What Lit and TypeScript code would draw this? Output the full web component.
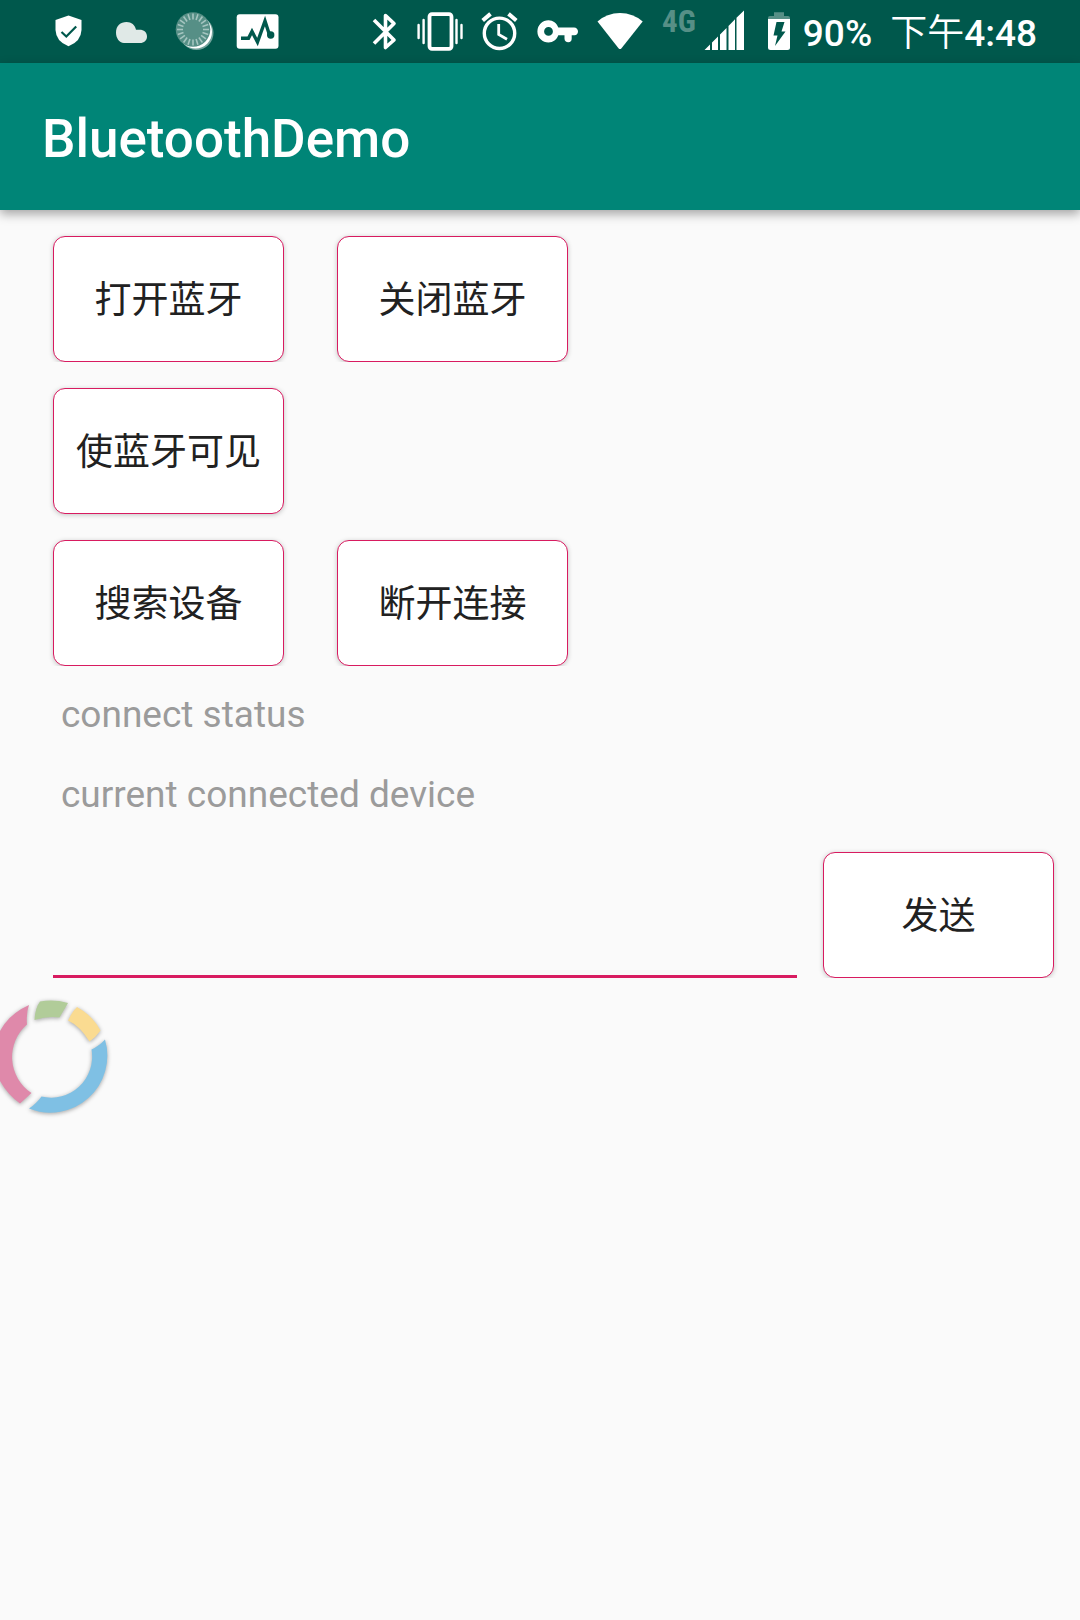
import { LitElement, html, css, svg } from "lit";
import { customElement, property, state } from "lit/decorators.js";

const ticks = Array.from({ length: 20 }, (_, i) => i * 18);

/* Each status icon is 63 units tall, the height of the status bar. */
const icons = {
  shield: {
    width: 63,
    art: svg`
      <path fill="#fff" d="M31.500 15.500 44.500 20V30Q44 41.500 31.500 46.300Q19 41.500 18.500 30V20Z"/>
      <path fill="none" stroke="#00584c" stroke-width="2.200" d="M24.500 32 29.300 36.500 39.200 26.500"/>`,
  },
  cloud: {
    width: 63,
    art: svg`
      <path fill="#e0e9e7" d="M24 43C19 42.500 16 38 16 32.500C16 26 20.500 22 26.500 22C31.500 22 35 25 36 29.800H39.500C44 29.800 47 32.500 47 36.500C47 40.500 44 43 40 43Z"/>`,
  },
  moon: {
    width: 63,
    art: svg`
      <circle cx="33.500" cy="33" r="17" fill="#fff" fill-opacity=".45"/>
      <circle cx="32.500" cy="32" r="16.500" fill="#fff"/>
      <circle cx="30" cy="29.500" r="17.300" fill="#568f86"/>
      ${ticks.map(
        (a) => svg`<path stroke="#a5c5c0" stroke-width="1.600" d="M30 13.500V19.500" transform="rotate(${a} 30 29.500)"/>`
      )}`,
  },
  pulse: {
    width: 63,
    art: svg`
      <rect x="10.700" y="14.200" width="41.800" height="34.600" rx="3" fill="#fff"/>
      <path fill="none" stroke="#00584c" stroke-width="3.400" d="M15 38.300H22.500L26 31.500 31.500 42 39 21 43.500 35"/>
      <circle cx="44.700" cy="35" r="3.700" fill="#00584c"/>`,
  },
  bluetooth: {
    width: 58,
    art: svg`
      <path fill="none" stroke="#fff" stroke-width="3.600" stroke-linejoin="round" d="M20 20 40 40 31.500 47.500V15.500L40 23.500 20 43.500"/>`,
  },
  vibrate: {
    width: 58,
    art: svg`
      <g fill="none" stroke="#fff">
        <rect x="17.500" y="14.200" width="22" height="34.600" rx="2.500" stroke-width="3.800"/>
        <path stroke-width="2.400" stroke-linecap="round" d="M6.600 25V38M11.600 20V43M44.500 20V43M49.500 25V38"/>
      </g>`,
  },
  alarm: {
    width: 58,
    art: svg`
      <g fill="none" stroke="#fff" stroke-width="3.400">
        <circle cx="29.500" cy="33.300" r="15.200"/>
        <path stroke-width="4" d="M12.700 20.500 20.500 13.900M46.300 20.500 38.500 13.900"/>
        <path stroke-width="2.800" d="M28.700 24V34.500L37 39.200"/>
      </g>`,
  },
  key: {
    width: 58,
    art: svg`
      <path fill="#fff" fill-rule="evenodd" d="M20.500 20.300C25 20.300 28.800 23.200 30.300 27.500H46C48.500 27.500 50 29.300 50 31.500S48.500 35.300 46.500 35.300H43.700V38.500C43.700 41 42.500 42.300 40.300 42.300S36.500 41 36.500 38.500V35.300H30.300C28.800 39.600 25 42.500 20.500 42.500A11.100 11.100 0 0 1 20.500 20.300ZM20.500 27A4.400 4.400 0 1 0 20.500 35.800A4.400 4.400 0 1 0 20.500 27Z"/>`,
  },
  wifi: {
    width: 68,
    art: svg`
      <path fill="#fff" d="M11.500 21.500Q21 13 34 13T56.700 21.500L35.500 48.200Q34 50 32.500 48.200Z"/>`,
  },
  signal: {
    width: 40,
    art: svg`
      <path fill="#fff" d="M.500 50 6 44.500V50ZM8 42.500 14 36.400V50H8ZM16 34.500 22.500 27.900V50H16ZM24.500 25.900 31 19.300V50H24.500ZM32.500 17.800 40 10.500V50H32.500Z"/>`,
  },
  battery: {
    width: 22,
    art: svg`
      <path fill="#568f86" d="M6 12.300H16V16H20Q22 16 22 18V19.500H0V18Q0 16 2 16H6Z"/>
      <path fill="#fff" d="M0 19H22V47.500Q22 50 19.500 50H2.500Q0 50 0 47.500Z"/>
      <path fill="#00584c" d="M8.500 22H16.500L13.500 31.500H17.500L7 46 9.500 35.500H5.500Z"/>`,
  },
};

type IconName = keyof typeof icons;

@customElement("status-icon")
class StatusIcon extends LitElement {
  @property() name: IconName = "shield";

  static styles = css`
    :host {
      display: block;
      flex: none;
    }
    .icon {
      display: block;
    }
  `;

  render() {
    const { width, art } = icons[this.name];
    return html`<svg class="icon" width=${width} height="63" viewBox="0 0 ${width} 63" aria-hidden="true">${art}</svg>`;
  }
}

@customElement("status-bar")
class StatusBar extends LitElement {
  static styles = css`
    :host {
      display: flex;
      justify-content: space-between;
      height: 63px;
      padding: 0 43px 0 37px;
      background: #00584c;
      color: #fff;
      font: 500 37px/67px Roboto, "Noto Sans CJK SC", sans-serif;
      white-space: nowrap;
    }
    .group {
      display: flex;
    }
    .network {
      font: 700 31px/44px "Roboto Condensed", Roboto, sans-serif;
      color: #568f86;
      margin: 0 8px;
    }
    .battery {
      margin: 0 13px 0 24px;
    }
    .level {
      margin-right: 18px;
    }
    .period {
      font-weight: 350;
    }
  `;

  render() {
    return html`
      <div class="group">
        <status-icon name="shield"></status-icon>
        <status-icon name="cloud"></status-icon>
        <status-icon name="moon"></status-icon>
        <status-icon name="pulse"></status-icon>
      </div>
      <div class="group">
        <status-icon name="bluetooth"></status-icon>
        <status-icon name="vibrate"></status-icon>
        <status-icon name="alarm"></status-icon>
        <status-icon name="key"></status-icon>
        <status-icon name="wifi"></status-icon>
        <span class="network">4G</span>
        <status-icon name="signal"></status-icon>
        <status-icon class="battery" name="battery"></status-icon>
        <span class="level">90%</span>
        <span class="time"><span class="period">下午</span>4:48</span>
      </div>
    `;
  }
}

@customElement("app-root")
class AppRoot extends LitElement {
  @state() private message = "";

  static styles = css`
    :host {
      display: flex;
      flex-direction: column;
      min-height: 100vh;
      overflow: hidden;
      background: #fafafa;
      font-family: Roboto, "Noto Sans CJK SC", sans-serif;
    }
    .app-bar {
      padding: 6px 42px 0;
      background: #008577;
      color: #fff;
      box-shadow: 0 4px 10px rgba(0, 0, 0, 0.35);
    }
    .title {
      margin: 0;
      font-size: 53px;
      font-weight: 500;
      line-height: 141px;
    }
    .content {
      display: flex;
      flex-direction: column;
      gap: 26px;
      padding: 26px 26px 0 53px;
    }
    .row {
      display: flex;
      gap: 53px;
    }
    .flat {
      clip-path: inset(-8px -8px 0 -8px);
    }
    .action {
      flex: none;
      box-sizing: border-box;
      width: 231px;
      height: 126px;
      padding: 4px 0 0;
      border: 1px solid #d81b60;
      border-radius: 12px;
      background: #fff;
      box-shadow: 0 1px 5px rgba(0, 0, 0, 0.22);
      color: #212121;
      font: 400 37px/54px Roboto, "Noto Sans CJK SC", sans-serif;
    }
    .status {
      display: flex;
      flex-direction: column;
      gap: 34px;
      padding: 0 0 8px 8px;
      color: #9b9b9b;
      font-size: 37px;
      line-height: 46px;
    }
    .line {
      margin: 0;
    }
    .compose {
      display: flex;
      gap: 26px;
    }
    .message {
      flex: 1;
      min-width: 0;
      box-sizing: border-box;
      padding: 0 8px;
      border: 0;
      border-bottom: 3px solid #d81b60;
      border-radius: 0;
      outline: none;
      background: none;
      color: #212121;
      font: 400 37px/54px Roboto, "Noto Sans CJK SC", sans-serif;
    }
    .ring {
      display: block;
      margin-top: 12px;
      filter: drop-shadow(0 1px 2px rgba(0, 0, 0, 0.35));
    }
  `;

  private onInput(e: Event) {
    this.message = (e.target as HTMLInputElement).value;
  }

  render() {
    return html`
      <status-bar></status-bar>
      <header class="app-bar"><h1 class="title">BluetoothDemo</h1></header>
      <main class="content">
        <div class="row flat">
          <button class="action" type="button">打开蓝牙</button>
          <button class="action" type="button">关闭蓝牙</button>
        </div>
        <div class="row">
          <button class="action" type="button">使蓝牙可见</button>
        </div>
        <div class="row flat">
          <button class="action" type="button">搜索设备</button>
          <button class="action" type="button">断开连接</button>
        </div>
        <div class="status">
          <p class="line">connect status</p>
          <p class="line">current connected device</p>
        </div>
        <form class="compose flat" @submit=${(e: Event) => e.preventDefault()}>
          <input class="message" type="text" aria-labelledby="send" .value=${this.message} @input=${this.onInput} />
          <button class="action" id="send" type="submit">发送</button>
        </form>
      </main>
      <svg class="ring" width="120" height="140" viewBox="0 0 120 140" aria-hidden="true">
        <path fill="#df89aa" d="M29 15Q26 23 27 34.500A43 43 0 0 0 31.500 103L20 113.500Q8 105 0 91V41Q9 24 29 15Z"/>
        <path fill="#b1cc99" d="M34.500 30Q35 18 40 11.500Q54 9 68 13L59.500 27.500Q47 26 34.500 30Z"/>
        <path fill="#fadb91" d="M77 17Q93 26 100.500 40.500Q96 47 89.500 51.500Q80 36 68 30.500Q72 22 77 17Z"/>
        <path fill="#7fc0e4" d="M105 49.500A57 57 0 0 1 29 118.500Q36 114 41.500 106.500A41 41 0 0 0 91.500 59.500Q99 56 105 49.500Z"/>
      </svg>
    `;
  }
}
